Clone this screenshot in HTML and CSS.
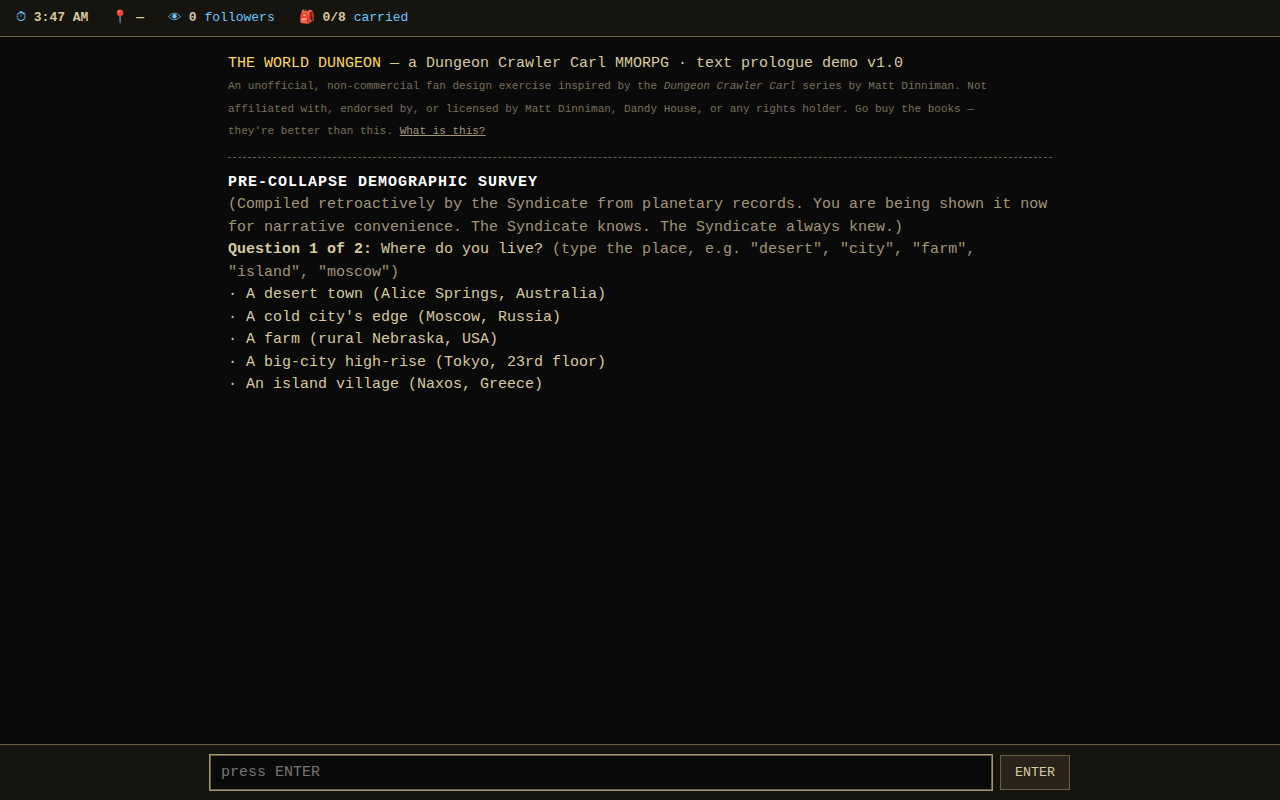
FILE: index.html
```html
<!DOCTYPE html>
<html lang="en">
<head>
    <meta charset="UTF-8">
    <meta name="viewport" content="width=device-width, initial-scale=1">
    <title>The World Dungeon</title>
    <link rel="stylesheet" href="styles.css">
</head>
<body>
    <header class="status-bar">
        <span class="stat">⏱ <b>3:47 AM</b></span>
        <span class="stat">📍 <b>—</b></span>
        <span class="stat"><svg class="eye" viewBox="0 0 13 10" aria-hidden="true"><path d="M.5 5.5Q6.5-1.2 12.5 5.5Q6.5 12 .5 5.5Z" fill="none" stroke="currentColor" stroke-width=".8"/><circle cx="6.5" cy="5.3" r="2.2" fill="currentColor"/></svg> <b>0</b> followers</span>
        <span class="stat">🎒 <b>0/8</b> carried</span>
    </header>

    <main class="log">
        <div><span class="gold">THE WORLD DUNGEON</span> — a Dungeon Crawler Carl MMORPG · text prologue demo v1.0</div>
        <div class="disclaimer"><span class="small">An unofficial, non-commercial fan design exercise inspired by the <i>Dungeon Crawler Carl</i> series by Matt Dinniman. Not affiliated with, endorsed by, or licensed by Matt Dinniman, Dandy House, or any rights holder. Go buy the books — they're better than this. <a href="#">What is this?</a></span></div>
        <hr class="rule">
        <h1 class="heading">PRE-COLLAPSE DEMOGRAPHIC SURVEY</h1>
        <div class="dim">(Compiled retroactively by the Syndicate from planetary records. You are being shown it now for narrative convenience. The Syndicate knows. The Syndicate always knew.)</div>
        <div><b>Question 1 of 2:</b> Where do you live? <span class="dim">(type the place, e.g. "desert", "city", "farm", "island", "moscow")</span></div>
        <div>· A desert town (Alice Springs, Australia)</div>
        <div>· A cold city's edge (Moscow, Russia)</div>
        <div>· A farm (rural Nebraska, USA)</div>
        <div>· A big-city high-rise (Tokyo, 23rd floor)</div>
        <div>· An island village (Naxos, Greece)</div>
    </main>

    <form class="input-bar" onsubmit="return false">
        <input class="command" type="text" aria-label="Command" placeholder="press ENTER" autocomplete="off">
        <button class="send" type="submit">ENTER</button>
    </form>
</body>
</html>
```

FILE: styles.css
```css
* {
    box-sizing: border-box;
}

body {
    margin: 0;
    height: 100vh;
    display: flex;
    flex-direction: column;
    background: #0a0a0a;
    color: #d8c9a0;
    font-family: "Liberation Mono", monospace;
    font-size: 15px;
    line-height: 1.5;
}

.status-bar {
    display: flex;
    flex-wrap: wrap;
    gap: 24px;
    padding: 8px 16px;
    background: #16140f;
    border-bottom: 1px solid #6b5f43;
    color: #6ec6ff;
    font-size: 13px;
}

.status-bar b {
    color: #d8c9a0;
}

.eye {
    width: 13px;
    height: 10px;
}

.log {
    flex: 1;
    width: 100%;
    max-width: 860px;
    margin: 0 auto;
    padding: 16px 18px;
    overflow-y: auto;
}

.gold {
    color: #ffd75e;
}

.dim {
    color: #a3957a;
}

.disclaimer {
    max-width: 790px;
    color: #7a705a;
}

.small {
    font-size: 11px;
}

.disclaimer a {
    color: #a3957a;
}

.rule {
    margin: 14px 0;
    border: 0;
    border-top: 1px dashed #6b5f43;
}

.heading {
    margin: 0;
    color: #fff;
    font-size: 15px;
    letter-spacing: 1px;
}

/* keeps the prompt centred in an 860px column */
.input-bar {
    display: flex;
    gap: 8px;
    padding: 10px max(16px, calc(50% - 430px));
    background: #16140f;
    border-top: 1px solid #6b5f43;
}

.command {
    flex: 1;
    min-width: 0;
    padding: 8px 10px;
    background: #0a0a0a;
    border: 1px solid #6b5f43;
    outline: 1px solid #a3957a;
    color: #d8c9a0;
    font-family: inherit;
    font-size: 15px;
}

.send {
    padding: 0 14px;
    background: #2a2319;
    border: 1px solid #6b5f43;
    color: #d8c9a0;
    font-family: inherit;
    cursor: pointer;
}
```
